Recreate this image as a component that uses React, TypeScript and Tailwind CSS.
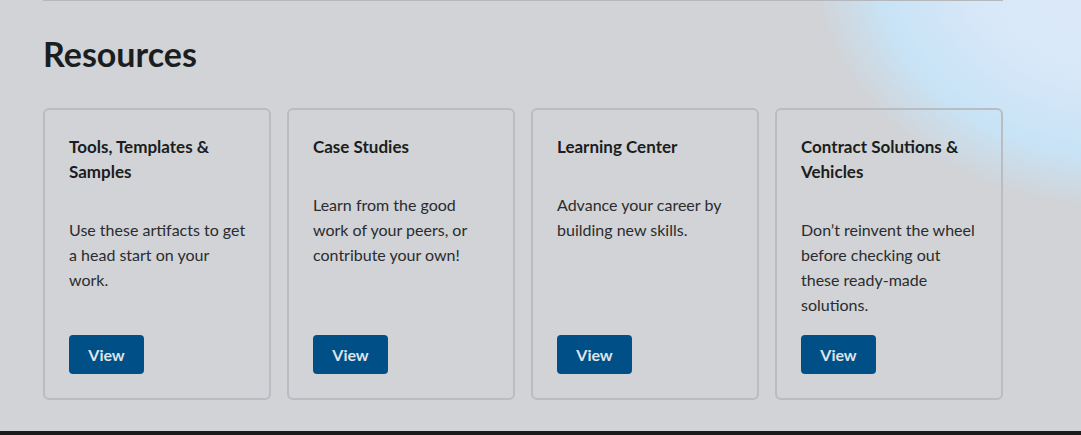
const cards = [
  {
    title: ["Tools, Templates &", "Samples"],
    body: ["Use these artifacts to get", "a head start on your", "work."],
  },
  {
    title: ["Case Studies"],
    body: ["Learn from the good", "work of your peers, or", "contribute your own!"],
  },
  {
    title: ["Learning Center"],
    body: ["Advance your career by", "building new skills."],
  },
  {
    title: ["Contract Solutions &", "Vehicles"],
    body: ["Don\u2019t reinvent the wheel", "before checking out", "these ready-made", "solutions."],
  },
];

function ResourceCard({ title, body }: { title: string[]; body: string[] }) {
  return (
    <div className="flex flex-col border-2 border-[#b9bcc0] rounded-[6px] px-6 pt-6 pb-[24px]">
      <h3 className="text-[17px] leading-[25px] font-bold text-[#1b1d20] mb-[33px]">
        {title.map((line, i) => (
          <span key={i} className="block whitespace-nowrap">
            {line}
          </span>
        ))}
      </h3>
      <p className="text-[16px] leading-[25px] text-[#2a2c2f] mb-[18px]">
        {body.map((line, i) => (
          <span key={i} className="block whitespace-nowrap">
            {line}
          </span>
        ))}
      </p>
      <button className="mt-auto w-[75px] h-[39px] rounded-[4px] bg-[#005087] text-[#dfe4ea] text-[16px] font-bold">
        View
      </button>
    </div>
  );
}

export default function App() {
  return (
    <div
      className="relative w-[1081px] h-[435px] overflow-hidden bg-[#d1d3d6] bg-[radial-gradient(ellipse_310px_250px_at_1120px_-40px,#dde9fa_0%,#d9e8f9_45%,#c8e3f6_78%,#d1d3d6_100%)] font-['Lato','Noto_Sans',sans-serif]"
    >
      <section className="pl-[43px] h-[431px]">
        <div className="w-[960px] border-t border-[#b4b8bc] pt-[34px]">
          <h2 className="text-[34px] leading-[38px] font-bold text-[#1b1e21] mb-[35px]">
            Resources
          </h2>
          <div className="grid grid-cols-4 gap-4">
            {cards.map((c, i) => (
              <ResourceCard key={i} title={c.title} body={c.body} />
            ))}
          </div>
        </div>
      </section>
      <div className="h-[4px] bg-[#1b1b1b]" />
    </div>
  );
}
